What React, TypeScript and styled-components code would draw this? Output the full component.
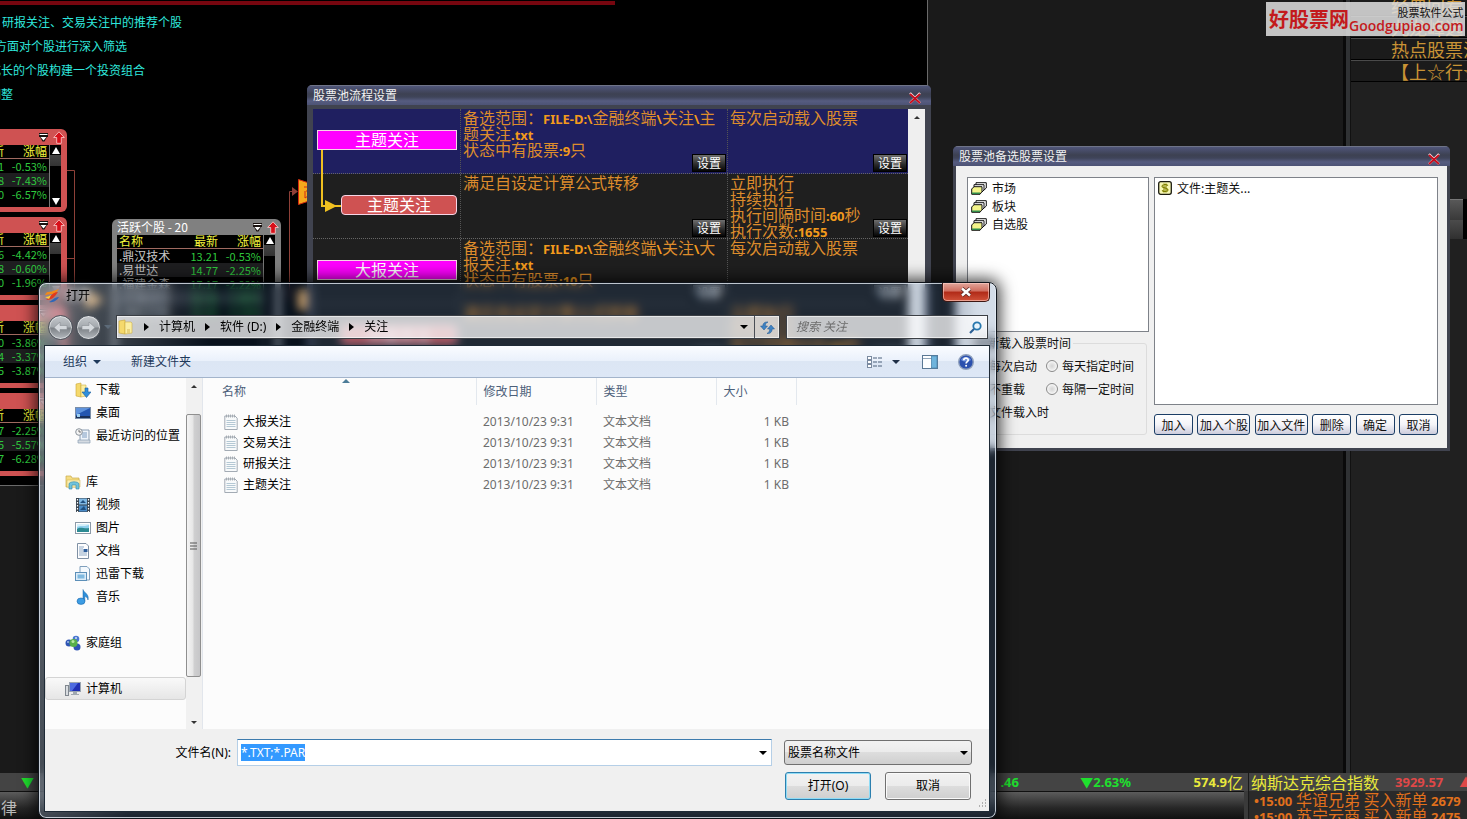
import React, { useEffect, useRef } from "react";
import styled, { createGlobalStyle, css } from "styled-components";

const ui = `"Noto Sans", "Noto Sans CJK SC", sans-serif`;
const cjk = `"Noto Sans CJK SC", sans-serif`;

const GlobalStyle = createGlobalStyle`
  *, *::before, *::after { box-sizing: border-box; }
  html, body { margin: 0; padding: 0; background: #1a1a1a; }
  body { font-family: ${ui}; font-size: 12px; line-height: 16px; }
  button, input, select { font: inherit; color: inherit; margin: 0; }
  button { border: 0; padding: 0; background: none; cursor: pointer; white-space: nowrap; }
  svg { display: block; flex: none; }
  p { margin: 0; }
`;

/* ---------- trading terminal behind the windows ---------- */

const Desktop = styled.div`
  position: relative;
  display: flex;
  flex-direction: column;
  height: 100vh;
  overflow: hidden;
  background: #1a1a1a;
`;

const Workspace = styled.main`
  flex: 1;
  min-height: 0;
  display: flex;
`;

const FlowCanvas = styled.section`
  position: relative;
  flex: none;
  width: 928px;
  height: 486px;
  overflow: hidden;
  background: #000;
  border-right: 1px solid #6a6a6a;
  border-bottom: 1px solid #6a6a6a;
`;

const RedRule = styled.div`
  width: 615px;
  height: 4px;
  margin-top: 1px;
  background: #76060f;
`;

const Note = styled.p<{ $x: number; $y: number }>`
  position: absolute;
  left: ${(p) => p.$x}px;
  top: ${(p) => p.$y}px;
  color: #2ee6dc;
  font-family: ${cjk};
  white-space: nowrap;
`;

const CanvasLines = styled.svg`
  position: absolute;
  left: 0;
  top: 0;
`;

const PoolCard = styled.article<{ $x: number; $y: number; $color: string }>`
  position: absolute;
  left: ${(p) => p.$x}px;
  top: ${(p) => p.$y}px;
  width: 169px;
  height: ${(p) => (p.$color === "#808080" ? 180 : 83)}px;
  padding: 0 6px 5px 5px;
  display: flex;
  flex-direction: column;
  border-radius: 6px;
  background: ${(p) => p.$color};
  font-family: ${cjk};
`;

const PoolTitle = styled.header`
  display: flex;
  align-items: center;
  gap: 4px;
  height: 16px;
  margin-right: -4px;
  color: #fff;
  white-space: nowrap;
  span { flex: 1; }
`;

const PoolBody = styled.div`
  flex: 1;
  min-height: 0;
  display: flex;
  overflow: hidden;
  background: #000;
`;

const PoolTable = styled.table`
  flex: 1;
  align-self: flex-start;
  table-layout: fixed;
  border-collapse: collapse;
  th {
    height: 13px;
    padding: 0;
    font-weight: 400;
    line-height: 12px;
    color: #f4f43c;
    text-align: right;
    border-bottom: 1px solid #a06a60;
  }
  td {
    height: 14px;
    padding: 0;
    font-size: 11px;
    line-height: 14px;
    color: #2fc83e;
    text-align: right;
    white-space: nowrap;
  }
  th:first-child, td:first-child { width: 60px; padding-left: 2px; text-align: left; }
  td:first-child { color: #c8c8c8; font-size: 12px; }
  th:last-child, td:last-child { width: 45px; padding-right: 2px; }
  tbody tr:nth-child(even) { background: #1e1e20; }
`;

const PoolScroll = styled.div`
  flex: none;
  width: 12px;
  display: flex;
  flex-direction: column;
  justify-content: space-between;
  align-items: center;
  padding: 2px 0;
  border-left: 1px solid #777;
  background: linear-gradient(#000, #000 10px, #444 10px, #333 21px, #000 21px);
`;

const Filler = styled.div`
  flex: 1;
  min-width: 0;
`;

const Splitter = styled.div`
  width: 8px;
  background: linear-gradient(90deg, #0a0a0a 0 3px, #303234 3px 7px, #111 7px);
`;

const RightPanel = styled.aside`
  flex: none;
  width: 116px;
  overflow: hidden;
  background: #202020;
`;

const Headline = styled.a`
  flex: none;
  display: block;
  height: 22px;
  padding-left: 40px;
  border-top: 1px solid #4a4a4a;
  border-bottom: 1px solid #000;
  background: #1b1b1b;
  color: #c99335;
  font: 18px/20px ${cjk};
  text-decoration: none;
  white-space: nowrap;
`;

const HeadlineList = styled.nav`
  height: 82px;
  display: flex;
  flex-direction: column;
  justify-content: flex-end;
`;

const PanelGrip = styled.div`
  width: 112px;
  height: 40px;
  margin-top: 117px;
  border-top: 1px solid #777;
  background: linear-gradient(#585858, #3a3a3a 50%, #4c4c4c 50%, #303030);
  box-shadow: 4px 0 0 #000;
`;

const Watermark = styled.div`
  position: absolute;
  right: 2px;
  top: 2px;
  width: 199px;
  height: 34px;
  display: flex;
  align-items: center;
  justify-content: space-between;
  padding: 0 2px 0 3px;
  background: rgba(224, 224, 224, 0.86);
  color: #c31a1c;
  white-space: nowrap;
`;

const WatermarkBrand = styled.strong`
  font: 700 20px/34px ${cjk};
`;

const WatermarkSite = styled.div`
  display: flex;
  flex-direction: column;
  align-items: flex-end;
  small { color: #111; font: 11px/14px ${cjk}; }
  b { font: 600 14px/14px "Open Sans", sans-serif; }
`;

const StatusBar = styled.footer`
  flex: none;
  display: flex;
  height: 46px;
  background: #3a3a3a;
  font-family: ${cjk};
`;

const StatusLeft = styled.div`
  flex: 1;
  min-width: 0;
  border-right: 1px solid #1a1a1a;
`;

const StatusRight = styled.div`
  flex: none;
  width: 218px;
  overflow: hidden;
  background: #2a2a2a;
`;

const Quotes = styled.div`
  display: flex;
  align-items: center;
  height: 18px;
  padding: 0 5px 0 21px;
  background: #444;
  font: 700 13px/18px ${ui};
  color: #1ee02e;
  white-space: nowrap;
`;

const Quote = styled.span<{ $w?: number; $color?: string }>`
  ${(p) => (p.$w ? css`width: ${p.$w}px;` : css`flex: 1;`)}
  display: flex;
  align-items: center;
  justify-content: ${(p) => (p.$w ? "flex-end" : "flex-start")};
  color: ${(p) => p.$color ?? "inherit"};
  i { font: 400 16px/18px ${cjk}; }
`;

const IndexQuote = styled.div`
  display: flex;
  align-items: center;
  gap: 16px;
  height: 18px;
  padding-left: 2px;
  background: #444;
  color: #e8e83a;
  font-size: 16px;
  line-height: 18px;
  white-space: nowrap;
  b { color: #e04848; font: 700 13px/18px ${ui}; }
`;

const CommandBar = styled.div`
  height: 28px;
  padding: 4px 0 0 1px;
  margin-right: 4px;
  border-top: 1px solid #111;
  background: linear-gradient(#5c5c5c, #262626 60%, #111);
  color: #bbb;
  font-size: 16px;
  line-height: 22px;
`;

const News = styled.p`
  height: 16px;
  padding-left: 5px;
  color: #e0701c;
  font-size: 16px;
  line-height: 16px;
  white-space: nowrap;
  b { font: 700 13px/12px ${ui}; }
`;

/* ---------- terminal style windows ---------- */

const ToolWindow = styled.section<{ $x: number; $y: number; $w: number; $h: number }>`
  position: absolute;
  left: ${(p) => p.$x}px;
  top: ${(p) => p.$y}px;
  width: ${(p) => p.$w}px;
  height: ${(p) => p.$h}px;
  display: flex;
  flex-direction: column;
  border-radius: 5px 5px 0 0;
  background: #40434f;
  overflow: hidden;
  font-family: ${cjk};
`;

const ToolTitle = styled.header`
  flex: none;
  display: flex;
  align-items: center;
  justify-content: space-between;
  height: 20px;
  padding: 0 10px 0 6px;
  border-top: 1px solid #6f7488;
  background: linear-gradient(#50567a, #464b66 4px, #3d4152 8px, #3f4459 11px, #565c80 15px, #4d5375);
  color: #f2f2f2;
  h2 { margin: 0; padding-bottom: 2px; font: 12px/16px ${cjk}; }
  button { padding-top: 5px; }
`;

const FlowBody = styled.div`
  flex: 1;
  min-height: 0;
  display: flex;
  margin: 4px 6px 5px 6px;
`;

const FlowList = styled.div`
  position: relative;
  flex: 1;
  background: #1f1f1f;
`;

const FlowRow = styled.div<{ $active?: boolean }>`
  display: grid;
  grid-template-columns: 148px 267px 1fr;
  height: 65px;
  border-bottom: 1px dotted #666;
  background: ${(p) => (p.$active ? "#1f1f60" : "#1f1f1f")};
`;

const FlowCell = styled.div`
  display: grid;
  grid-template-rows: 64px;
  border-right: 1px dotted #555;
  padding-left: 2px;
  color: #dd8c2c;
  > * { grid-area: 1 / 1; }
  &:last-child { border-right: 0; }
`;

const FlowText = styled.div`
  font-size: 16px;
  white-space: nowrap;
  b { font: 700 13px/12px ${ui}; color: #f29a1c; }
`;

const Line = styled.span`
  display: block;
  height: 16px;
  line-height: 16px;
`;

const SetButton = styled.button`
  place-self: end;
  width: 34px;
  height: 18px;
  margin: 0 1px 1px 0;
  border: 1px solid #000;
  background: linear-gradient(#6e6e6e, #2a2a2a 60%, #050505);
  color: #fff;
  font: 12px/16px ${cjk};
`;

const Stage = styled.span<{ $child?: boolean }>`
  align-self: start;
  justify-self: end;
  width: ${(p) => (p.$child ? 116 : 140)}px;
  height: 20px;
  margin: 21px 3px 0 0;
  border: 1px solid #f6d5e6;
  border-radius: ${(p) => (p.$child ? 4 : 0)}px;
  background: ${(p) => (p.$child ? "#cf5252" : "#ff00ff")};
  color: #fff;
  font-size: 16px;
  line-height: 17px;
  text-align: center;
`;

const StageLink = styled.svg`
  position: absolute;
  left: 6px;
  top: 41px;
`;

const LightScroll = styled.div`
  width: 17px;
  display: flex;
  justify-content: center;
  padding-top: 7px;
  background: #efefef;
`;

const PickBody = styled.div`
  flex: 1;
  display: grid;
  grid-template-columns: 182px 1fr;
  column-gap: 5px;
  margin: 0 3px 3px;
  padding: 11px 9px 13px 11px;
  background: #f0f0f0;
  color: #111;
`;

const PickColumn = styled.div<{ $gap: number }>`
  display: flex;
  flex-direction: column;
  gap: ${(p) => p.$gap}px;
`;

const Pane = styled.ul`
  flex: 1;
  margin: 0;
  padding: 1px 3px;
  list-style: none;
  border: 1px solid #7e8289;
  background: #fff;
  li {
    display: flex;
    align-items: center;
    gap: 5px;
    height: 18px;
  }
`;

const Schedule = styled.fieldset`
  height: 99px;
  margin: 0 2px 0 0;
  padding: 8px 0 0 5px;
  border: 1px solid #dcdcdc;
  border-radius: 3px;
  legend { height: 14px; padding: 0 2px; line-height: 14px; }
`;

const Choices = styled.div`
  display: grid;
  grid-template-columns: 73px 1fr;
  row-gap: 7px;
`;

const Choice = styled.label`
  display: flex;
  align-items: center;
  gap: 4px;
  height: 16px;
  white-space: nowrap;
`;

const Tick = styled.input`
  appearance: none;
  flex: none;
  width: 12px;
  height: 12px;
  border: 1px solid #8a8a8a;
  border-radius: ${(p) => (p.type === "radio" ? "50%" : "0")};
  background: radial-gradient(#d4d4d4, #f0f0f0 60%, #fff);
  box-shadow: inset 0 0 0 1px #f4f4f4;
`;

const PickActions = styled.div`
  display: flex;
  justify-content: space-between;
`;

const PickButton = styled.button<{ $wide?: boolean }>`
  width: ${(p) => (p.$wide ? 53 : 39)}px;
  height: 21px;
  border: 1px solid #1c3e66;
  border-radius: 3px;
  background: linear-gradient(#fff, #f4f4f8 50%, #ccccdc);
  font: 12px/18px ${cjk};
`;

/* ---------- open file dialog ---------- */

const Dialog = styled.section`
  position: absolute;
  left: 38px;
  top: 282px;
  width: 959px;
  height: 537px;
  display: flex;
  flex-direction: column;
  padding: 0 6px 6px 5px;
  border: 1px solid #10151c;
  border-radius: 8px;
  background:
    linear-gradient(100deg, rgba(255, 255, 255, 0.42), rgba(255, 255, 255, 0.22) 70px, rgba(255, 255, 255, 0) 180px),
    rgba(40, 84, 140, 0.2);
  backdrop-filter: blur(5px);
  box-shadow: inset 0 0 0 1px rgba(230, 238, 246, 0.8), 0 0 16px 3px rgba(0, 0, 0, 0.75);
`;

const DialogTitle = styled.header`
  display: flex;
  align-items: center;
  gap: 6px;
  height: 26px;
  h2 {
    flex: 1;
    margin: 0;
    font: 12px/16px ${ui};
    color: #000;
    text-shadow: 0 0 6px rgba(255, 255, 255, 0.9), 0 0 10px rgba(255, 255, 255, 0.7);
  }
`;

const CloseButton = styled.button`
  align-self: flex-start;
  display: flex;
  align-items: center;
  justify-content: center;
  width: 48px;
  height: 19px;
  border: 1px solid #3c1713;
  border-top: 0;
  border-radius: 0 0 5px 5px;
  background: linear-gradient(#e2a79c, #cf6d5e 45%, #b02a17 50%, #d0523a);
  box-shadow: inset 0 0 0 1px rgba(255, 210, 200, 0.6);
`;

const NavRow = styled.div`
  display: flex;
  align-items: center;
  height: 36px;
  padding: 0 2px 0 4px;
`;

const RoundButton = styled.button`
  display: grid;
  place-items: center;
  width: 25px;
  height: 25px;
  margin-right: 3px;
  border: 1px solid #4a5058;
  border-radius: 50%;
  background: linear-gradient(#c4c8cc, #a4a9ae 48%, #7c8186 52%, #b4b9be);
  box-shadow: inset 0 0 0 1px rgba(255, 255, 255, 0.5);
`;

const GlassField = styled.div<{ $w?: number }>`
  ${(p) => (p.$w ? css`width: ${p.$w}px;` : css`flex: 1;`)}
  display: flex;
  align-items: center;
  height: 24px;
  border: 1px solid #3b3f45;
  background: rgba(255, 255, 255, 0.74);
  box-shadow: inset 0 0 0 1px rgba(255, 255, 255, 0.6);
`;

const Address = styled(GlassField)`
  margin: 0 6px 0 4px;
  padding-left: 1px;
`;

const Crumbs = styled.nav`
  flex: 1;
  display: flex;
  align-items: center;
  gap: 10px;
  margin-left: 10px;
  color: #000;
`;

const AddressButton = styled.button<{ $divided?: boolean }>`
  display: grid;
  place-items: center;
  width: ${(p) => (p.$divided ? 25 : 20)}px;
  height: 22px;
  border-left: ${(p) => (p.$divided ? "1px solid #4a4e55" : "0")};
`;

const SearchInput = styled.input`
  flex: 1;
  min-width: 0;
  padding: 0 0 0 9px;
  border: 0;
  outline: 0;
  background: none;
  &::placeholder { color: #6c6c6c; font-style: italic; opacity: 1; }
`;

const SearchButton = styled.button`
  padding-right: 5px;
`;

const Client = styled.div`
  flex: 1;
  min-height: 0;
  display: flex;
  flex-direction: column;
  border: 1px solid #1e2a36;
  background: #fcfcfc;
`;

const Toolbar = styled.div`
  flex: none;
  display: flex;
  align-items: center;
  height: 32px;
  padding: 0 15px 0 18px;
  border-bottom: 1px solid #a3b4cb;
  background: linear-gradient(#fafcff, #e9f0fb 50%, #dce6f4 50%, #dde7f6);
  color: #1e395b;
`;

const ToolButton = styled.button<{ $gap: number }>`
  display: flex;
  align-items: center;
  gap: 6px;
  margin-right: ${(p) => p.$gap}px;
`;

const Spacer = styled.span`
  flex: 1;
`;

const Browser = styled.div`
  flex: 1;
  min-height: 0;
  display: flex;
  overflow: hidden;
`;

const Tree = styled.ul`
  flex: none;
  width: 141px;
  margin: 0;
  padding: 0;
  list-style: none;
  color: #000;
`;

const TreeItem = styled.li<{ $level?: number; $top?: boolean; $selected?: boolean }>`
  display: flex;
  align-items: center;
  gap: 5px;
  height: 23px;
  margin-top: ${(p) => (p.$top ? 23 : 0)}px;
  padding-left: ${(p) => (p.$level === 2 ? 29 : 19)}px;
  border: 1px solid ${(p) => (p.$selected ? "#d4d4d4" : "transparent")};
  border-radius: 3px;
  background: ${(p) => (p.$selected ? "linear-gradient(#f9f9f9, #e6e6e6)" : "none")};
  white-space: nowrap;
`;

const TreeScroll = styled.div`
  flex: none;
  width: 17px;
  display: flex;
  flex-direction: column;
  align-items: center;
  padding: 7px 1px 5px 0;
  margin-right: 1px;
  border-right: 1px solid #e2e6ec;
  background: #f1f1f1;
`;

const TreeThumb = styled.div`
  flex: 1;
  display: grid;
  place-items: center;
  width: 15px;
  margin: 26px 0 44px;
  border: 1px solid #8f8f8f;
  border-radius: 2px;
  background: linear-gradient(90deg, #f4f4f4, #e6e6e6 45%, #cfcfd0 55%, #c6c6c8);
`;

const FileTable = styled.table`
  align-self: flex-start;
  table-layout: fixed;
  width: 592px;
  border-collapse: collapse;
  color: #6d6d6d;
  th {
    position: relative;
    height: 27px;
    padding: 0 0 0 7px;
    border-right: 1px solid #e3e8ee;
    color: #4c607a;
    font-weight: 400;
    text-align: left;
  }
  th svg { position: absolute; right: 126px; top: 1px; }
  td { height: 21px; padding: 0 0 0 7px; white-space: nowrap; }
  th:first-child { padding-left: 18px; }
  td:first-child { padding-left: 20px; color: #000; }
  td:last-child { padding: 0 7px 0 0; text-align: right; }
  tbody::before { content: ""; display: block; height: 6px; }
`;

const FileName = styled.span`
  display: flex;
  align-items: center;
  gap: 5px;
`;

const Form = styled.form`
  flex: none;
  position: relative;
  display: grid;
  grid-template-columns: 186px 535px 188px;
  column-gap: 6px;
  row-gap: 6px;
  justify-content: start;
  align-items: center;
  height: 82px;
  padding: 10px 0 11px;
  background: #f0f0f0;
  color: #000;
`;

const NameLabel = styled.label`
  text-align: right;
`;

const Combo = styled.div`
  display: flex;
  align-items: center;
  height: 27px;
  padding: 0 4px 0 2px;
  border: 1px solid #b5cfe7;
  border-top-color: #3d7bad;
  background: #fff;
`;

const NameInput = styled.input`
  flex: 1;
  min-width: 0;
  height: 18px;
  padding: 0 1px;
  border: 0;
  outline: 0;
  background: none;
  &::selection { background: #3399ff; color: #fff; }
`;

const TypeBox = styled.div`
  display: grid;
  align-items: center;
  margin-left: 6px;
  width: 188px;
  > * { grid-area: 1 / 1; }
  svg { justify-self: end; margin-right: 4px; pointer-events: none; }
`;

const TypeSelect = styled.select`
  appearance: none;
  width: 188px;
  height: 25px;
  padding: 0 3px;
  border: 1px solid #707070;
  border-radius: 3px;
  background: linear-gradient(#f2f2f2, #ebebeb 50%, #dddddd 50%, #cfcfcf);
`;

const Buttons = styled.div`
  grid-column: 3;
  display: flex;
  gap: 14px;
  margin-left: 7px;
`;

const PushButton = styled.button<{ $default?: boolean }>`
  flex: none;
  width: 86px;
  height: 28px;
  border: 1px solid ${(p) => (p.$default ? "#2c7fae" : "#707070")};
  border-radius: 3px;
  background: linear-gradient(#f2f2f2, #ebebeb 50%, #dddddd 50%, #cfcfcf);
  box-shadow: inset 0 0 0 1px ${(p) => (p.$default ? "#8fdcf6" : "#fafafa")};
`;

const Grip = styled.svg`
  position: absolute;
  right: 2px;
  bottom: 2px;
`;

/* ---------- icons ---------- */

const Caret = ({ color = "#000", up = false, w = 8 }: { color?: string; up?: boolean; w?: number }) => (
  <svg width={w} height={w / 2} viewBox="0 0 8 4">
    <path d={up ? "M0 4L4 0L8 4Z" : "M0 0L4 4L8 0Z"} fill={color} />
  </svg>
);

const CrumbArrow = () => (
  <svg width="5" height="8" viewBox="0 0 5 8"><path d="M0 0L5 4L0 8Z" fill="#000" /></svg>
);

const RedCross = () => (
  <svg width="12" height="12" viewBox="0 0 12 12">
    <path d="M1 1L11 11M11 1L1 11" stroke="#f8dcde" strokeWidth="2.4" />
    <path d="M1 2L11 11M11 2L1 11" stroke="#c80c1c" strokeWidth="1.7" />
  </svg>
);

const MenuMark = () => (
  <svg width="11" height="9" viewBox="0 0 11 9">
    <path d="M1 0H10V4H9L6.500 8.500H4.500L2 4H1Z" fill="#1a1210" />
    <path d="M1.500 1.500H9.500" stroke="#fff" />
    <path d="M2.500 4H8.500L5.500 7.500Z" fill="#fff" />
  </svg>
);

const RedUp = () => (
  <svg width="12" height="13" viewBox="0 0 12 13">
    <path d="M6 .8L11.300 6.500H8.300V12.300H3.700V6.500H.7Z" fill="#d8101a" stroke="#ffd0d0" strokeWidth=".8" />
  </svg>
);

const ScrollMark = ({ down = false }: { down?: boolean }) => (
  <svg width="8" height="7" viewBox="0 0 8 7"><path d={down ? "M0 0H8L4 7Z" : "M4 0L8 7H0Z"} fill="#fff" /></svg>
);

const AppIcon = () => (
  <svg width="16" height="16" viewBox="0 0 16 16">
    <path d="M1 7C3 2 6 5 9 3L15 1C12 5 11 6 8 6C5 6 4 7 1 7Z" fill="#f08a1c" />
    <path d="M2 12C5 11 8 4 14 4C11 8 9 12 2 12Z" fill="#e23a1c" />
    <path d="M5 14C8 13 10 9 15 9C13 12 10 15 5 14Z" fill="#2f66b8" />
    <path d="M1 9C4 9 5 8 7 7L5 11Z" fill="#ffd23c" />
  </svg>
);

const NavArrow = ({ back = false }: { back?: boolean }) => (
  <svg width="15" height="13" viewBox="0 0 15 13">
    <path
      d={back ? "M7 1L1 6.5L7 12V8.5H14V4.5H7Z" : "M8 1L14 6.5L8 12V8.5H1V4.5H8Z"}
      fill="#d4d8dc" stroke="#8a8f94" strokeWidth=".6"
    />
  </svg>
);

const FolderIcon = () => (
  <svg width="16" height="16" viewBox="0 0 16 16">
    <path d="M1 2L7 1V15L1 14Z" fill="#f5d96c" stroke="#c9a437" strokeWidth=".6" />
    <path d="M7 3H13L14 4V14L7 15Z" fill="#fbeea2" stroke="#cfae45" strokeWidth=".6" />
    <path d="M9 10H12V14L9 14.5Z" fill="#e8d27c" />
  </svg>
);

const DownloadIcon = () => (
  <svg width="16" height="16" viewBox="0 0 16 16">
    <path d="M1 2L6 1V15L1 14Z" fill="#f5d96c" stroke="#c9a437" strokeWidth=".6" />
    <path d="M6 3H11V14L6 15Z" fill="#fbeea2" stroke="#cfae45" strokeWidth=".6" />
    <path d="M10 6H13V10H16L11.5 15.5L7 10H10Z" fill="#2f8fdc" stroke="#1a5c9c" strokeWidth=".6" />
  </svg>
);

const DesktopIcon = () => (
  <svg width="16" height="16" viewBox="0 0 16 16">
    <rect x=".5" y="2.5" width="15" height="11" fill="#2456b0" stroke="#7a8ea8" />
    <path d="M1 3H15L1 10Z" fill="#5f93dc" />
    <rect x="1" y="11" width="14" height="2" fill="#1a2f56" />
    <rect x="2" y="9" width="3" height="3" fill="#9fd0f0" />
  </svg>
);

const RecentIcon = () => (
  <svg width="16" height="16" viewBox="0 0 16 16">
    <path d="M5 2H14V13H5Z" fill="#eef4fa" stroke="#8a9db2" />
    <path d="M7 5H12M7 7H12M7 9H12" stroke="#7c9cc0" />
    <path d="M3 12H15V15H3Z" fill="#d5dbe2" stroke="#8a9db2" strokeWidth=".7" />
    <circle cx="4" cy="4" r="3.3" fill="#f4f4f4" stroke="#8c949c" />
    <path d="M4 2V4H6" stroke="#555" strokeWidth=".8" fill="none" />
  </svg>
);

const LibraryIcon = () => (
  <svg width="16" height="16" viewBox="0 0 16 16">
    <path d="M1 2H6L7 4H14V13H1Z" fill="#f5dd83" stroke="#c9a94a" strokeWidth=".7" />
    <path d="M2 6H15V13H2Z" fill="#fbf0b4" stroke="#cfae45" strokeWidth=".5" />
    <path d="M4 15V10C4 7 14 7 14 10V15H11V11H7V15Z" fill="#6fc3dc" stroke="#2f86a4" strokeWidth=".6" />
  </svg>
);

const VideoIcon = () => (
  <svg width="16" height="16" viewBox="0 0 16 16">
    <rect x="1" y="1" width="14" height="14" fill="#3a4550" />
    <rect x="4" y="1.5" width="8" height="6" fill="#7fb8e4" />
    <rect x="4" y="8.5" width="8" height="6" fill="#4a8cc8" />
    <path d="M5 6L8 3L11 6ZM5 13L9 9L11 13Z" fill="#1f4f80" />
    <path d="M2.5 2V15M13.5 2V15" stroke="#fff" strokeWidth="1.2" strokeDasharray="1.5 1.5" />
  </svg>
);

const PictureIcon = () => (
  <svg width="16" height="16" viewBox="0 0 16 16">
    <rect x=".5" y="2.5" width="15" height="11" fill="#fff" stroke="#8c9aa8" />
    <rect x="2" y="4" width="12" height="8" fill="#8fd0ee" />
    <path d="M2 12V9C5 6 9 9 14 8V12Z" fill="#2c8a92" />
    <path d="M2 7C5 5 8 7 14 5V4H2Z" fill="#d6f0fb" />
  </svg>
);

const DocumentIcon = () => (
  <svg width="16" height="16" viewBox="0 0 16 16">
    <path d="M2.5.5H11L13.5 3V15.5H2.5Z" fill="#fdfdfe" stroke="#7f90a4" />
    <path d="M4 4H9M4 6H8M4 8H8M4 10H12M4 12H12" stroke="#8fa9c4" />
    <rect x="8.500" y="6" width="4" height="3" fill="#2f5f9c" />
  </svg>
);

const ThunderIcon = () => (
  <svg width="16" height="16" viewBox="0 0 16 16">
    <path d="M5 .5H12L14.500 3V14H5Z" fill="#f4f9fd" stroke="#7f9fbc" />
    <rect x=".5" y="6.500" width="11" height="8" fill="#dcecf8" stroke="#5c8fb8" />
    <rect x="2.500" y="8.500" width="7" height="4" fill="#7fb9e0" />
  </svg>
);

const MusicIcon = () => (
  <svg width="16" height="16" viewBox="0 0 16 16">
    <path d="M8 .5C9 4 14.500 5 13 11C12.500 8 10.500 7.500 9.800 7.500V12H8Z" fill="#2f8fd8" stroke="#1b68ac" strokeWidth=".5" />
    <ellipse cx="6" cy="12.200" rx="4" ry="3.200" fill="#3d9de4" stroke="#1b68ac" strokeWidth=".6" />
  </svg>
);

const HomeGroupIcon = () => (
  <svg width="16" height="16" viewBox="0 0 16 16">
    <circle cx="11" cy="4" r="3.300" fill="#4a78d0" />
    <circle cx="4" cy="8" r="3.500" fill="#2f55b4" />
    <circle cx="12" cy="12" r="3.500" fill="#2f55b4" />
    <circle cx="8.500" cy="8" r="4" fill="#58b048" />
    <circle cx="8" cy="6.500" r="1.500" fill="#b8e8a0" />
    <circle cx="11" cy="3" r="1" fill="#cfe0fa" />
    <circle cx="3" cy="7" r="1" fill="#a0b8ec" />
  </svg>
);

const ComputerIcon = () => (
  <svg width="16" height="16" viewBox="0 0 16 16">
    <rect x=".5" y="4.500" width="3" height="10" fill="#d8dce0" stroke="#80878f" />
    <rect x="4.500" y="1.500" width="11" height="9" fill="#1f2fb4" stroke="#9aa4b0" />
    <path d="M5 2H13L7 10H5Z" fill="#4c6ae0" />
    <path d="M8 11H12V13H14V14H6V13H8Z" fill="#a0a8b0" />
  </svg>
);

const NetworkIcon = () => (
  <svg width="16" height="16" viewBox="0 0 16 16">
    <circle cx="6" cy="8" r="6" fill="#3f9ccc" />
    <path d="M2 6C5 3 8 4 10 5" stroke="#bfe6f4" fill="none" />
  </svg>
);

const TextFileIcon = () => (
  <svg width="14" height="16" viewBox="0 0 14 16">
    <path d="M.8 2H11L13.200 4.200V15.500H.8Z" fill="#f8fafb" stroke="#98a2ac" strokeWidth=".9" />
    <path d="M2.500 .5V3.500M4.500 .5V3.500M6.500 .5V3.500M8.500 .5V3.500M10.500 .5V3.500" stroke="#9aa2aa" strokeWidth=".8" />
    <path d="M2.500 6.500H11.500M2.500 8.500H11.500M2.500 10.500H11.500M2.500 12.500H11.500" stroke="#b4c8d4" />
  </svg>
);

const RefreshIcon = () => (
  <svg width="15" height="13" viewBox="0 0 15 13">
    <path d="M8 1C4.500 .5 2.800 2.500 2.800 5H.5L4 9L7.500 5H5.200C5.300 3 6.200 1.800 8 1Z" fill="#3f83c4" stroke="#1d5590" strokeWidth=".5" />
    <path d="M7 12.500C10.500 13 12.200 10.500 12.200 8H14.500L11 4L7.500 8H9.800C9.700 10 8.800 11.500 7 12.500Z" fill="#3f83c4" stroke="#1d5590" strokeWidth=".5" />
  </svg>
);

const SearchIcon = () => (
  <svg width="13" height="13" viewBox="0 0 13 13">
    <circle cx="8" cy="5" r="3.700" fill="#e8f4fc" stroke="#2878ae" strokeWidth="1.800" />
    <path d="M5 8L1 12" stroke="#2b5f94" strokeWidth="2.200" />
  </svg>
);

const ViewIcon = () => (
  <svg width="16" height="14" viewBox="0 0 16 14">
    {[1, 5, 9].map((y) => (
      <g key={y}>
        <rect x=".5" y={y + 0.5} width="4" height="3" fill="#fff" stroke="#7a8aa0" />
        <path d={`M6 ${y + 2}H10M11 ${y + 2}H15`} stroke="#4c607a" />
      </g>
    ))}
  </svg>
);

const PreviewIcon = () => (
  <svg width="16" height="14" viewBox="0 0 16 14">
    <rect x=".5" y=".5" width="15" height="13" fill="#fdfeff" stroke="#5a7894" />
    <path d="M1 3.500H15" stroke="#8fa4b8" />
    <rect x="9.500" y="1" width="5.500" height="12" fill="#6fb4dc" stroke="#4c84ac" strokeWidth=".8" />
  </svg>
);

const HelpIcon = () => (
  <svg width="16" height="16" viewBox="0 0 16 16">
    <circle cx="8" cy="8" r="7.300" fill="#2b50ae" stroke="#8fa0bc" strokeWidth="1.400" />
    <path d="M3 6C4 2 12 2 13 6C10 8 6 8 3 6Z" fill="#6f92dc" />
    <path d="M5.800 6.200C5.800 3.400 10.300 3.500 10.200 6.100C10.100 7.700 8.200 7.600 8.100 9.500" fill="none" stroke="#fff" strokeWidth="1.700" />
    <circle cx="8.100" cy="11.800" r="1" fill="#fff" />
  </svg>
);

const StackIcon = () => (
  <svg width="16" height="13" viewBox="0 0 16 13">
    <path d="M5 .7H15.300V6L12.500 8.500H5Z" fill="#fff" stroke="#111" />
    <path d="M3 2.700H13V8L11 10H3Z" fill="#fff" stroke="#111" />
    <path d="M.7 7L3 4.700H11V9.500L9 12.300H.7Z" fill="#f3f48a" stroke="#111" />
    <path d="M1 11.300H9" stroke="#2f8a4a" strokeWidth="1.500" />
  </svg>
);

const MoneyIcon = () => (
  <svg width="14" height="14" viewBox="0 0 14 14">
    <rect x=".7" y=".7" width="12.600" height="12.600" rx="2" fill="#f8f8b4" stroke="#1a1a10" strokeWidth="1.300" />
    <path d="M10 4.500C8 3 4 3.200 4 5.200C4 7.500 10 6.500 10 8.900C10 11 6 11 4 9.500M6 2.500V11.500M8 2.500V11.500" fill="none" stroke="#808000" strokeWidth="1.100" />
  </svg>
);

/* ---------- data ---------- */

type Row = [string, string, string];

const pools: { y: number; rows: Row[] }[] = [
  { y: 129, rows: [[".鼎汉技术", "13.21", "-0.53%"], [".万邦达", "38.48", "-7.43%"], [".碧水源", "41.60", "-6.57%"]] },
  { y: 217, rows: [[".三维丝", "19.66", "-4.42%"], [".永清环保", "32.98", "-0.60%"], [".天壕节能", "12.50", "-1.96%"]] },
  { y: 305, rows: [[".华谊兄弟", "28.60", "-3.86%"], [".光线传媒", "36.04", "-3.37%"], [".乐视网", "40.25", "-3.87%"]] },
  { y: 393, rows: [[".苏宁云商", "11.27", "-2.25%"], [".掌趣科技", "33.85", "-5.57%"], [".北纬通信", "46.17", "-6.28%"]] },
];

const activeRows: Row[] = [
  [".鼎汉技术", "13.21", "-0.53%"],
  [".易世达", "14.77", "-2.25%"],
  [".福建金森", "17.17", "-2.22%"],
  [".天源迪科", "10.36", "-1.80%"],
  [".海虹控股", "15.40", "-3.10%"],
];

const files = ["大报关注", "交易关注", "研报关注", "主题关注"];

function Pool({ x, y, color, title, rows }: { x: number; y: number; color: string; title: string; rows: Row[] }) {
  return (
    <PoolCard $x={x} $y={y} $color={color}>
      <PoolTitle>
        <span>{title}</span>
        <MenuMark />
        <RedUp />
      </PoolTitle>
      <PoolBody>
        <PoolTable>
          <thead>
            <tr><th>名称</th><th>最新</th><th>涨幅</th></tr>
          </thead>
          <tbody>
            {rows.map((r) => (
              <tr key={r[0]}>{r.map((v) => <td key={v}>{v}</td>)}</tr>
            ))}
          </tbody>
        </PoolTable>
        <PoolScroll><ScrollMark /><ScrollMark down /></PoolScroll>
      </PoolBody>
    </PoolCard>
  );
}

function SourceRow({ name, active, first, rest, count }: { name: string; active?: boolean; first: string; rest: string; count: number }) {
  return (
    <FlowRow $active={active}>
      <FlowCell><Stage>{name}</Stage></FlowCell>
      <FlowCell>
        <FlowText>
          <Line>备选范围：<b>FILE-D:\</b>金融终端<b>\</b>关注<b>\</b>{first}</Line>
          <Line>{rest}<b>.txt</b></Line>
          <Line>状态中有股票<b>:{count}</b>只</Line>
        </FlowText>
        <SetButton>设置</SetButton>
      </FlowCell>
      <FlowCell>
        <FlowText><Line>每次启动载入股票</Line></FlowText>
        <SetButton>设置</SetButton>
      </FlowCell>
    </FlowRow>
  );
}

function FilterRow({ name }: { name: string }) {
  return (
    <FlowRow>
      <FlowCell><Stage $child>{name}</Stage></FlowCell>
      <FlowCell>
        <FlowText><Line>满足自设定计算公式转移</Line></FlowText>
        <SetButton>设置</SetButton>
      </FlowCell>
      <FlowCell>
        <FlowText>
          <Line>立即执行</Line>
          <Line>持续执行</Line>
          <Line>执行间隔时间<b>:60</b>秒</Line>
          <Line>执行次数<b>:1655</b></Line>
        </FlowText>
        <SetButton>设置</SetButton>
      </FlowCell>
    </FlowRow>
  );
}

function OpenDialog() {
  const nameRef = useRef<HTMLInputElement>(null);
  useEffect(() => {
    nameRef.current?.focus({ preventScroll: true });
    nameRef.current?.select();
  }, []);

  return (
    <Dialog aria-label="打开">
      <DialogTitle>
        <AppIcon />
        <h2>打开</h2>
        <CloseButton aria-label="关闭">
          <svg width="12" height="10" viewBox="0 0 12 10">
            <path d="M2 1.500L10 8.500M10 1.500L2 8.500" stroke="#5a2a24" strokeWidth="4" />
            <path d="M2 1.500L10 8.500M10 1.500L2 8.500" stroke="#fff" strokeWidth="2.400" />
          </svg>
        </CloseButton>
      </DialogTitle>
      <NavRow>
        <RoundButton aria-label="后退"><NavArrow back /></RoundButton>
        <RoundButton aria-label="前进"><NavArrow /></RoundButton>
        <Caret color="#5c6a78" w={8} />
        <Address>
          <FolderIcon />
          <Crumbs>
            <CrumbArrow /><button>计算机</button>
            <CrumbArrow /><button>软件 (D:)</button>
            <CrumbArrow /><button>金融终端</button>
            <CrumbArrow /><button>关注</button>
          </Crumbs>
          <AddressButton aria-label="历史位置"><Caret /></AddressButton>
          <AddressButton aria-label="刷新" $divided><RefreshIcon /></AddressButton>
        </Address>
        <GlassField $w={202}>
          <SearchInput aria-label="搜索 关注" placeholder="搜索 关注" />
          <SearchButton aria-label="搜索"><SearchIcon /></SearchButton>
        </GlassField>
      </NavRow>
      <Client>
        <Toolbar>
          <ToolButton $gap={30}>组织 <Caret color="#1e395b" /></ToolButton>
          <ToolButton $gap={0}>新建文件夹</ToolButton>
          <Spacer />
          <ToolButton $gap={9} aria-label="更改视图"><ViewIcon /></ToolButton>
          <ToolButton $gap={22} aria-label="更多选项"><Caret color="#1e2f46" /></ToolButton>
          <ToolButton $gap={20} aria-label="预览窗格"><PreviewIcon /></ToolButton>
          <ToolButton $gap={0} aria-label="帮助"><HelpIcon /></ToolButton>
        </Toolbar>
        <Browser>
          <Tree>
            <TreeItem $level={2}><DownloadIcon />下载</TreeItem>
            <TreeItem $level={2}><DesktopIcon />桌面</TreeItem>
            <TreeItem $level={2}><RecentIcon />最近访问的位置</TreeItem>
            <TreeItem $top><LibraryIcon />库</TreeItem>
            <TreeItem $level={2}><VideoIcon />视频</TreeItem>
            <TreeItem $level={2}><PictureIcon />图片</TreeItem>
            <TreeItem $level={2}><DocumentIcon />文档</TreeItem>
            <TreeItem $level={2}><ThunderIcon />迅雷下载</TreeItem>
            <TreeItem $level={2}><MusicIcon />音乐</TreeItem>
            <TreeItem $top><HomeGroupIcon />家庭组</TreeItem>
            <TreeItem $top $selected><ComputerIcon />计算机</TreeItem>
            <TreeItem $top><NetworkIcon /></TreeItem>
          </Tree>
          <TreeScroll>
            <Caret up color="#333" w={6} />
            <TreeThumb>
              <svg width="7" height="8" viewBox="0 0 7 8"><path d="M0 1H7M0 4H7M0 7H7" stroke="#555" /></svg>
            </TreeThumb>
            <Caret color="#333" w={6} />
          </TreeScroll>
          <FileTable>
            <colgroup>
              <col style={{ width: 272 }} /><col style={{ width: 120 }} /><col style={{ width: 120 }} /><col style={{ width: 80 }} />
            </colgroup>
            <thead>
              <tr>
                <th>名称<Caret up color="#4c7c98" /></th>
                <th>修改日期</th>
                <th>类型</th>
                <th>大小</th>
              </tr>
            </thead>
            <tbody>
              {files.map((f) => (
                <tr key={f}>
                  <td><FileName><TextFileIcon />{f}</FileName></td>
                  <td>2013/10/23 9:31</td>
                  <td>文本文档</td>
                  <td>1 KB</td>
                </tr>
              ))}
            </tbody>
          </FileTable>
        </Browser>
        <Form onSubmit={(e) => e.preventDefault()}>
          <NameLabel htmlFor="file-name">文件名(N):</NameLabel>
          <Combo>
            <NameInput id="file-name" ref={nameRef} defaultValue="*.TXT;*.PAR" />
            <Caret />
          </Combo>
          <TypeBox>
            <TypeSelect aria-label="文件类型"><option>股票名称文件</option></TypeSelect>
            <Caret />
          </TypeBox>
          <Buttons>
            <PushButton type="submit" $default>打开(O)</PushButton>
            <PushButton type="button">取消</PushButton>
          </Buttons>
          <Grip width="10" height="10" viewBox="0 0 10 10">
            <path d="M8 1h1M8 4h1M8 7h1M5 4h1M5 7h1M2 7h1" stroke="#9a9a9a" strokeWidth="1.500" />
          </Grip>
        </Form>
      </Client>
    </Dialog>
  );
}

export default function App() {
  return (
    <>
      <GlobalStyle />
      <Desktop>
        <Workspace>
          <FlowCanvas>
            <RedRule />
            <Note $x={2} $y={14}>研报关注、交易关注中的推荐个股</Note>
            <Note $x={-5} $y={38}>方面对个股进行深入筛选</Note>
            <Note $x={-11} $y={62}>成长的个股构建一个投资组合</Note>
            <Note $x={-11} $y={86}>调整</Note>
            <CanvasLines width="320" height="480" viewBox="0 0 320 480">
              <path d="M67 170.500H74.500V346H67M67 258.500H74.500M74.500 300H86M289.500 300V191.500H293" stroke="#8e4038" fill="none" />
              <path d="M292 187L298 191.500L292 196Z" fill="#8e4038" />
              <path d="M298.500 179.500L312 184V200L298.500 204.500Z" fill="#f6a81c" stroke="#d02a10" />
              <path d="M304 187H309M306 191H310M305 191V198L308 196" stroke="#d02a10" fill="none" />
              <path d="M86 290L104 300L86 310Z" fill="#f0b060" />
              <path d="M298 290H308V310H298Z" fill="#f0b060" />
            </CanvasLines>
            {pools.map((p) => (
              <Pool key={p.y} x={-102} y={p.y} color="#cf5252" title="" rows={p.rows} />
            ))}
            <Pool x={112} y={219} color="#808080" title="活跃个股 - 20" rows={activeRows} />
          </FlowCanvas>
          <Filler />
          <Splitter />
          <RightPanel>
            <HeadlineList>
              <Headline href="#classic">经典回看</Headline>
              <Headline href="#peak">九龙峰选</Headline>
              <Headline href="#hot">热点股票池</Headline>
              <Headline href="#up">【上☆行☆</Headline>
            </HeadlineList>
            <PanelGrip />
          </RightPanel>
        </Workspace>
        <StatusBar>
          <StatusLeft>
            <Quotes>
              <Quote>▼</Quote>
              <Quote $w={60}>.46</Quote>
              <Quote $w={112}>▼2.63%</Quote>
              <Quote $w={112} $color="#eaea3c">574.9<i>亿</i></Quote>
            </Quotes>
            <CommandBar>律</CommandBar>
          </StatusLeft>
          <StatusRight>
            <IndexQuote>纳斯达克综合指数 <b>3929.57</b><b>▲</b></IndexQuote>
            <News><b>•15:00</b> 华谊兄弟 买入新单 <b>2679</b></News>
            <News><b>•15:00</b> 苏宁云商 买入新单 <b>2475</b></News>
          </StatusRight>
        </StatusBar>

        <Watermark>
          <WatermarkBrand>好股票网</WatermarkBrand>
          <WatermarkSite>
            <small>股票软件公式</small>
            <b>Goodgupiao.com</b>
          </WatermarkSite>
        </Watermark>

        <ToolWindow $x={307} $y={85} $w={624} $h={400}>
          <ToolTitle>
            <h2>股票池流程设置</h2>
            <button aria-label="关闭流程设置"><RedCross /></button>
          </ToolTitle>
          <FlowBody>
            <FlowList>
              <SourceRow active name="主题关注" first="主" rest="题关注" count={9} />
              <FilterRow name="主题关注" />
              <SourceRow name="大报关注" first="大" rest="报关注" count={10} />
              <FilterRow name="大报关注" />
              <StageLink width="24" height="62" viewBox="0 0 24 62">
                <path d="M3 0V56H22" stroke="#f0c020" strokeWidth="2" fill="none" />
                <path d="M6 50L18 56L6 62Z" fill="#f0c020" />
              </StageLink>
            </FlowList>
            <LightScroll><Caret up color="#333" w={6} /></LightScroll>
          </FlowBody>
        </ToolWindow>

        <ToolWindow $x={953} $y={146} $w={497} $h={305}>
          <ToolTitle>
            <h2>股票池备选股票设置</h2>
            <button aria-label="关闭备选股票设置"><RedCross /></button>
          </ToolTitle>
          <PickBody>
            <PickColumn $gap={4}>
              <Pane>
                <li><StackIcon />市场</li>
                <li><StackIcon />板块</li>
                <li><StackIcon />自选股</li>
              </Pane>
              <Schedule>
                <legend>刷新载入股票时间</legend>
                <Choices>
                  <Choice><Tick type="radio" name="reload" />每次启动</Choice>
                  <Choice><Tick type="radio" name="reload" />每天指定时间</Choice>
                  <Choice><Tick type="radio" name="reload" />不重载</Choice>
                  <Choice><Tick type="radio" name="reload" />每隔一定时间</Choice>
                  <Choice><Tick type="checkbox" />文件载入时</Choice>
                </Choices>
              </Schedule>
            </PickColumn>
            <PickColumn $gap={9}>
              <Pane>
                <li><MoneyIcon />文件:主题关...</li>
              </Pane>
              <PickActions>
                <PickButton>加入</PickButton>
                <PickButton $wide>加入个股</PickButton>
                <PickButton $wide>加入文件</PickButton>
                <PickButton>删除</PickButton>
                <PickButton>确定</PickButton>
                <PickButton>取消</PickButton>
              </PickActions>
            </PickColumn>
          </PickBody>
        </ToolWindow>

        <OpenDialog />
      </Desktop>
    </>
  );
}
